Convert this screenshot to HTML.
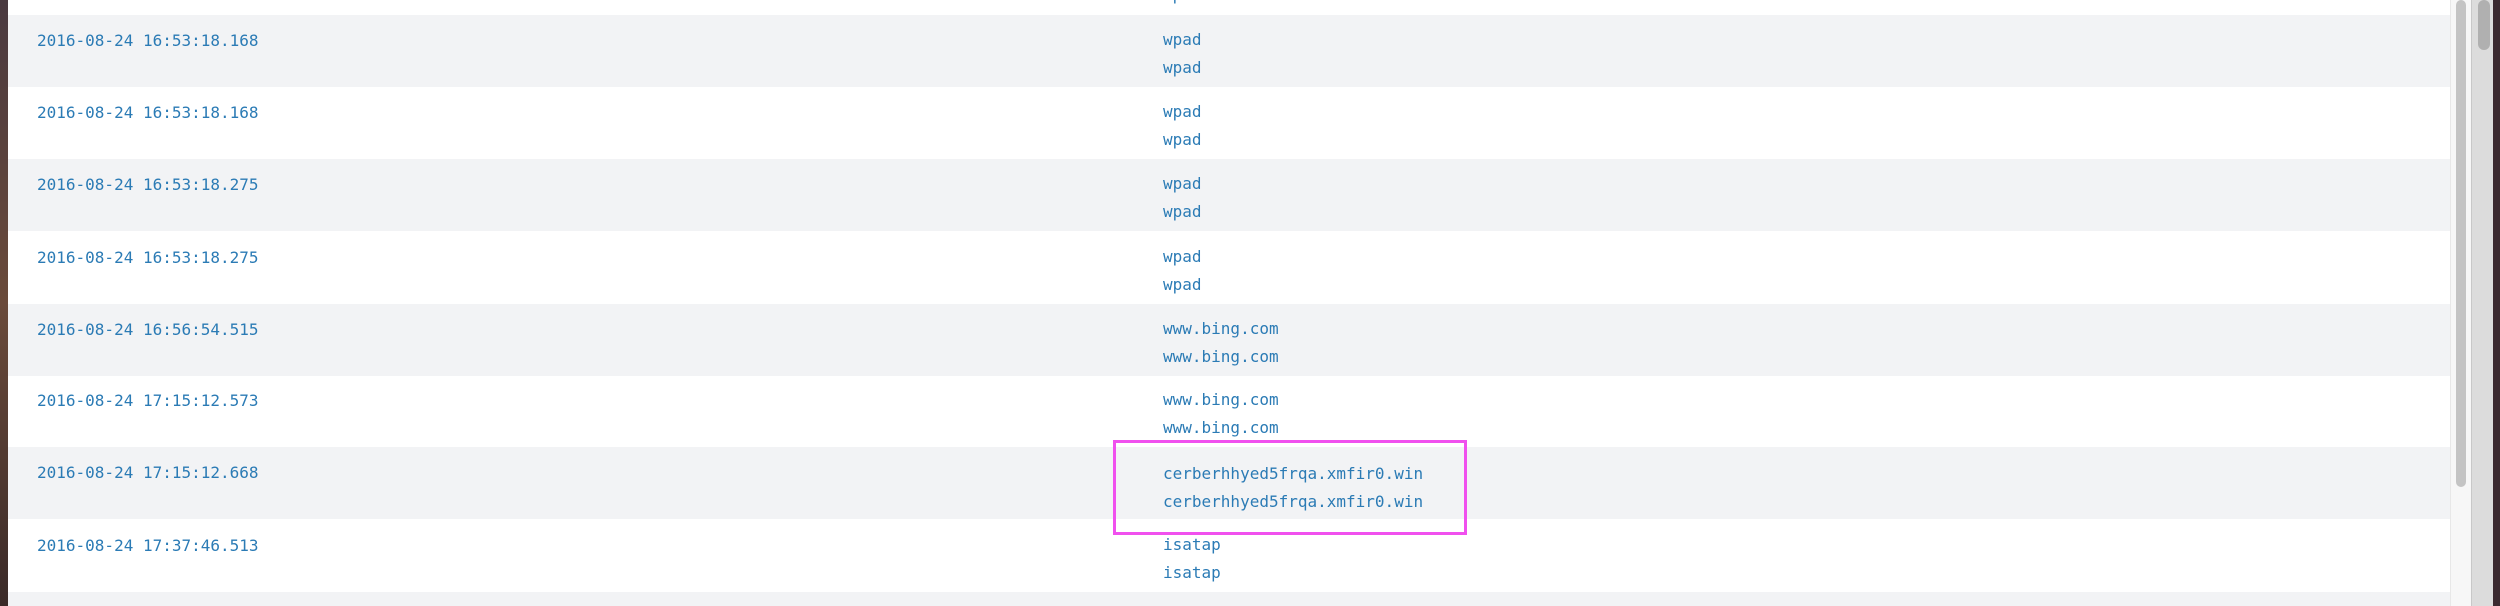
<!DOCTYPE html>
<html><head><style>
html,body{margin:0;padding:0;width:2500px;height:606px;overflow:hidden;background:#3a2a2a;}
#bg{position:absolute;left:0;top:0;width:8px;height:606px;background:linear-gradient(#4a3a40,#6a4a3a,#3a2a28);}
#main{position:absolute;left:8px;top:0;width:2442px;height:606px;background:#fff;overflow:hidden;}
.row{position:absolute;left:0;width:2442px;height:72px;font-family:"DejaVu Sans Mono","Liberation Mono",monospace;font-size:16px;color:#2b7bb5;}
.g{background:#f2f3f5;}
.ts{position:absolute;left:29px;top:12px;line-height:28px;}
.d{position:absolute;left:1155px;top:11px;line-height:28px;}
#sb{position:absolute;left:2450px;top:0;width:20px;height:606px;background:#f7f7f7;border-left:1px solid #e8e8e8;}
#thumb{position:absolute;left:2456px;top:0;width:10px;height:487px;background:#c4c4c4;border-radius:5px;}
#win{position:absolute;left:2471px;top:0;width:22px;height:606px;background:#dcdcdc;border-left:1px solid #c8c8c8;}
#wthumb{position:absolute;left:2478px;top:0;width:12px;height:50px;background:#b0b0b0;border-radius:6px;}
#dk{position:absolute;left:2493px;top:0;width:7px;height:606px;background:#3b2a30;}
#box{position:absolute;left:1113px;top:440px;width:348px;height:89px;border:3px solid #f050ee;}
</style></head><body>
<div id="bg"></div>
<div id="main">
<div class="row" style="top:-58px"><div class="d">wpad<br>wpad</div></div>
<div class="row g" style="top:15px"><div class="ts">2016-08-24 16:53:18.168</div><div class="d">wpad<br>wpad</div></div>
<div class="row" style="top:87px"><div class="ts">2016-08-24 16:53:18.168</div><div class="d">wpad<br>wpad</div></div>
<div class="row g" style="top:159px"><div class="ts">2016-08-24 16:53:18.275</div><div class="d">wpad<br>wpad</div></div>
<div class="row" style="top:232px"><div class="ts">2016-08-24 16:53:18.275</div><div class="d">wpad<br>wpad</div></div>
<div class="row g" style="top:304px"><div class="ts">2016-08-24 16:56:54.515</div><div class="d">www.bing.com<br>www.bing.com</div></div>
<div class="row" style="top:375px"><div class="ts">2016-08-24 17:15:12.573</div><div class="d">www.bing.com<br>www.bing.com</div></div>
<div class="row g" style="top:447px"><div class="ts">2016-08-24 17:15:12.668</div><div class="d" style="top:13px">cerberhhyed5frqa.xmfir0.win<br>cerberhhyed5frqa.xmfir0.win</div></div>
<div class="row" style="top:520px"><div class="ts">2016-08-24 17:37:46.513</div><div class="d">isatap<br>isatap</div></div>
<div class="row g" style="top:592px;height:14px"></div>
</div>
<div id="box"></div>
<div id="sb"></div><div id="thumb"></div>
<div id="win"></div><div id="wthumb"></div>
<div id="dk"></div>
</body></html>
